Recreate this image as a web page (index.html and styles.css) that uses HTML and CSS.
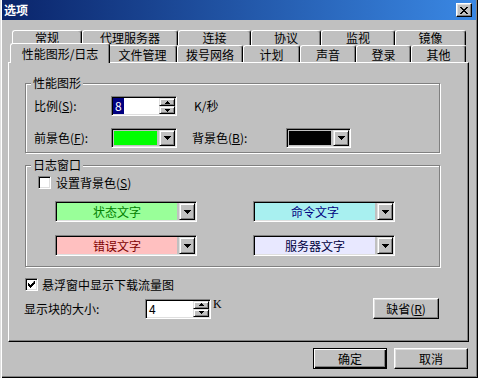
FILE: index.html
```html
<!DOCTYPE html>
<html lang="zh-CN">
<head>
  <meta charset="UTF-8" />
  <title>选项</title>
  <link rel="stylesheet" href="styles.css">
</head>
<body>
  <div class="window">
    <div class="titlebar">
      <span class="title">选项</span>
      <div class="close">
        <svg width="8" height="7" viewBox="0 0 8 7"><path d="M0 0h2v1h1v1h2v-1h1v-1h2v1h-1v1h-1v1h-1v1h1v1h1v1h1v1h-2v-1h-1v-1h-2v1h-1v1h-2v-1h1v-1h1v-1h1v-1h-1v-1h-1v-1h-1z"/></svg>
      </div>
    </div>

    <div class="tabctl">
      <div class="tab-row back">
        <div class="tab">常规</div>
        <div class="tab">代理服务器</div>
        <div class="tab">连接</div>
        <div class="tab">协议</div>
        <div class="tab">监视</div>
        <div class="tab">镜像</div>
      </div>
      <div class="tab-row front">
        <div class="tab active">性能图形/日志</div>
        <div class="tab">文件管理</div>
        <div class="tab">拨号网络</div>
        <div class="tab">计划</div>
        <div class="tab">声音</div>
        <div class="tab">登录</div>
        <div class="tab">其他</div>
      </div>

      <div class="panel">
        <div class="group perf">
          <span class="group-title">性能图形</span>
          <div class="row">
            <span class="lbl lbl-short">比例(<u>S</u>):</span>
            <div class="spin">
              <div class="spin-value"><span class="sel">8</span></div>
              <div class="spin-btns">
                <span class="spin-btn"><svg width="5" height="3" viewBox="0 0 5 3"><path d="M2 0h1v1h1v1h1v1h-5v-1h1v-1h1z"/></svg></span>
                <span class="spin-btn"><svg width="5" height="3" viewBox="0 0 5 3"><path d="M0 0h5v1h-1v1h-1v1h-1v-1h-1v-1h-1z"/></svg></span>
              </div>
            </div>
            <span class="unit">K/秒</span>
          </div>
          <div class="row gap-row">
            <span class="lbl lbl-short">前景色(<u>F</u>):</span>
            <div class="combo color-combo">
              <span class="combo-face fg-green"></span>
              <span class="drop"><svg width="7" height="4" viewBox="0 0 7 4"><path d="M0 0h7v1h-1v1h-1v1h-1v1h-1v-1h-1v-1h-1v-1h-1z"/></svg></span>
            </div>
            <span class="lbl lbl-bg">背景色(<u>B</u>):</span>
            <div class="combo color-combo narrow">
              <span class="combo-face bg-black"></span>
              <span class="drop"><svg width="7" height="4" viewBox="0 0 7 4"><path d="M0 0h7v1h-1v1h-1v1h-1v1h-1v-1h-1v-1h-1v-1h-1z"/></svg></span>
            </div>
          </div>
        </div>

        <div class="group log">
          <span class="group-title">日志窗口</span>
          <label class="check-row indent">
            <span class="check"></span>
            <span>设置背景色(<u>S</u>)</span>
          </label>
          <div class="combo-grid">
            <div class="combo text-combo">
              <span class="combo-face state">状态文字</span>
              <span class="drop"><svg width="7" height="4" viewBox="0 0 7 4"><path d="M0 0h7v1h-1v1h-1v1h-1v1h-1v-1h-1v-1h-1v-1h-1z"/></svg></span>
            </div>
            <div class="combo text-combo">
              <span class="combo-face command">命令文字</span>
              <span class="drop"><svg width="7" height="4" viewBox="0 0 7 4"><path d="M0 0h7v1h-1v1h-1v1h-1v1h-1v-1h-1v-1h-1v-1h-1z"/></svg></span>
            </div>
            <div class="combo text-combo">
              <span class="combo-face error">错误文字</span>
              <span class="drop"><svg width="7" height="4" viewBox="0 0 7 4"><path d="M0 0h7v1h-1v1h-1v1h-1v1h-1v-1h-1v-1h-1v-1h-1z"/></svg></span>
            </div>
            <div class="combo text-combo">
              <span class="combo-face server">服务器文字</span>
              <span class="drop"><svg width="7" height="4" viewBox="0 0 7 4"><path d="M0 0h7v1h-1v1h-1v1h-1v1h-1v-1h-1v-1h-1v-1h-1z"/></svg></span>
            </div>
          </div>
        </div>

        <label class="check-row float-opt">
          <span class="check checked">
            <svg width="7" height="7" viewBox="0 0 7 7"><path d="M6 0h1v3h-1v1h-1v1h-1v1h-1v1h-1v-1h-1v-1h-1v-3h1v1h1v1h1v-1h1v-1h1z"/></svg>
          </span>
          <span>悬浮窗中显示下载流量图</span>
        </label>

        <div class="size-row">
          <span class="lbl lbl-size">显示块的大小:</span>
          <div class="spin">
            <div class="spin-value plain">4</div>
            <div class="spin-btns">
              <span class="spin-btn"><svg width="5" height="3" viewBox="0 0 5 3"><path d="M2 0h1v1h1v1h1v1h-5v-1h1v-1h1z"/></svg></span>
              <span class="spin-btn"><svg width="5" height="3" viewBox="0 0 5 3"><path d="M0 0h5v1h-1v1h-1v1h-1v-1h-1v-1h-1z"/></svg></span>
            </div>
          </div>
          <span class="unit-k">K</span>
          <div class="btn reset">缺省(<u>R</u>)</div>
        </div>
      </div>
    </div>

    <div class="footer">
      <div class="btn default">确定</div>
      <div class="btn">取消</div>
    </div>
  </div>
</body>
</html>
```

FILE: styles.css
```css
body {
  margin: 0;
  background: #c0c0c0;
  font-family: "Noto Sans CJK SC", "Noto Sans CJK JP", sans-serif;
  font-size: 12px;
  line-height: 14px;
  color: #000;
}
u {
  text-decoration: underline;
}
.window {
  width: 478px;
  height: 378px;
  box-sizing: border-box;
  padding: 0 2px;
  background: #c0c0c0;
  box-shadow: inset 1px 0 #dfdfdf, inset 2px 0 #fff, inset -1px -1px #000, inset -2px -2px #808080;
}
.titlebar {
  height: 20px;
  display: flex;
  align-items: center;
  justify-content: space-between;
  padding: 0 4px 0 2px;
  background: linear-gradient(to right, #0a246a, #3a88e4);
  color: #fff;
  font-weight: bold;
}
.close {
  width: 16px;
  height: 14px;
  box-sizing: border-box;
  display: flex;
  align-items: center;
  justify-content: center;
  background: #c0c0c0;
  border: 1px solid;
  border-color: #fff #000 #000 #fff;
  box-shadow: inset -1px -1px #808080, inset 1px 1px #dfdfdf;
}

/* tabs */
.tabctl {
  margin: 10px 7px 0 6px;
}
.tab-row {
  display: flex;
  align-items: flex-start;
  padding-left: 4px;
}
.tab-row.back {
  height: 15px;
}
.tab-row.front {
  height: 17px;
}
.tab {
  box-sizing: border-box;
  height: 100%;
  text-align: center;
  border-top: 1px solid #fff;
  border-left: 1px solid #fff;
  border-right: 1px solid #000;
  border-radius: 3px 3px 0 0;
  box-shadow: inset -1px 0 #808080;
  background: #c0c0c0;
}
.back .tab {
  line-height: 14px;
}
.front .tab {
  line-height: 17px;
}
.back .tab:nth-child(1) { width: 70px; }
.back .tab:nth-child(2) { width: 96px; }
.back .tab:nth-child(3) { width: 73px; }
.back .tab:nth-child(4) { width: 70px; }
.back .tab:nth-child(5) { width: 74px; }
.back .tab:nth-child(6) { width: 71px; }
.front .tab:nth-child(2) { width: 69px; }
.front .tab:nth-child(3) { width: 66px; }
.front .tab:nth-child(4) { width: 57px; }
.front .tab:nth-child(5) { width: 56px; }
.front .tab:nth-child(6) { width: 55px; }
.front .tab:nth-child(7) { width: 55px; }
.tab.active {
  position: relative;
  z-index: 1;
  width: 100px;
  height: 20px;
  margin: -2px -2px 0 -2px;
  line-height: 19px;
}

.panel {
  height: 280px;
  box-sizing: border-box;
  border: 1px solid;
  border-color: #fff #000 #000 #fff;
  box-shadow: inset -1px -1px #808080;
  padding-top: 20px;
}

/* group boxes */
.group {
  position: relative;
  margin: 0 28px 0 16px;
  border: 1px solid #808080;
  box-shadow: inset 1px 1px #fff, 1px 1px #fff;
}
.group-title {
  position: absolute;
  top: -7px;
  left: 5px;
  padding: 0 2px;
  line-height: 12px;
  background: #c0c0c0;
}
.perf {
  padding: 12px 0 4px 8px;
}
.log {
  margin-top: 12px;
  padding: 10px 0 10px 0;
}
.row {
  display: flex;
  align-items: center;
  height: 20px;
}
.gap-row {
  margin-top: 12px;
}
.lbl-short {
  width: 77px;
}
.lbl-bg {
  width: 94px;
  margin-left: 15px;
}
.unit {
  margin-left: 17px;
}

/* spin boxes */
.spin {
  display: flex;
  box-sizing: border-box;
  width: 66px;
  height: 20px;
  padding: 1px;
  background: #fff;
  border: 1px solid;
  border-color: #808080 #fff #fff #808080;
  box-shadow: inset 1px 1px #000, inset -1px -1px #dfdfdf;
}
.spin-value {
  flex: 1;
  display: flex;
  align-items: center;
  line-height: 16px;
}
.spin-value.plain {
  padding-left: 2px;
}
.sel {
  background: #000080;
  color: #fff;
  padding: 0 2px;
}
.spin-btns {
  display: flex;
  flex-direction: column;
  width: 16px;
}
.spin-btn {
  flex: 1;
  display: flex;
  align-items: center;
  justify-content: center;
  box-sizing: border-box;
  background: #c0c0c0;
  border: 1px solid;
  border-color: #dfdfdf #000 #000 #dfdfdf;
  box-shadow: inset 1px 1px #fff, inset -1px -1px #808080;
}

/* combo boxes */
.combo {
  display: flex;
  box-sizing: border-box;
  padding: 1px;
  border: 1px solid;
  border-color: #808080 #fff #fff #808080;
  box-shadow: inset 1px 1px #000, inset -1px -1px #dfdfdf;
  background: #c0c0c0;
}
.color-combo {
  width: 66px;
  height: 20px;
}
.color-combo.narrow {
  width: 65px;
}
.combo-face {
  flex: 1;
  text-align: center;
  line-height: 16px;
}
.fg-green { background: #00ff00; margin: 1px 2px 1px 1px; }
.bg-black { background: #000; margin: 1px 2px 1px 1px; }
.drop {
  width: 16px;
  display: flex;
  align-items: center;
  justify-content: center;
  box-sizing: border-box;
  background: #c0c0c0;
  border: 1px solid;
  border-color: #dfdfdf #000 #000 #dfdfdf;
  box-shadow: inset 1px 1px #fff, inset -1px -1px #808080;
}
.combo-grid {
  display: grid;
  grid-template-columns: 142px 142px;
  column-gap: 56px;
  row-gap: 13px;
  margin: 12px 0 0 29px;
}
.text-combo {
  height: 21px;
}
.text-combo .combo-face {
  line-height: 17px;
  margin-right: 2px;
}
.state { background: #99ff99; color: #008000; }
.command { background: #a8f0f0; color: #000080; }
.error { background: #ffc0c0; color: #800000; }
.server { background: #e8e8ff; color: #000040; }

/* check boxes */
.check-row {
  display: flex;
  align-items: center;
  height: 13px;
}
.check-row .check {
  margin-right: 5px;
}
.indent {
  padding-left: 12px;
}
.check {
  width: 13px;
  height: 13px;
  box-sizing: border-box;
  display: flex;
  align-items: center;
  justify-content: center;
  background: #fff;
  border: 1px solid;
  border-color: #808080 #fff #fff #808080;
  box-shadow: inset 1px 1px #000, inset -1px -1px #dfdfdf;
}
.float-opt {
  margin: 11px 0 0 16px;
}
.float-opt .check {
  margin-right: 4px;
}

.size-row {
  display: flex;
  align-items: center;
  height: 21px;
  margin: 7px 29px 0 15px;
}
.lbl-size {
  width: 121px;
}
.unit-k {
  align-self: flex-start;
  margin-left: 2px;
  line-height: 12px;
  font-family: "Liberation Serif", serif;
}

/* buttons */
.btn {
  box-sizing: border-box;
  width: 74px;
  height: 21px;
  line-height: 19px;
  text-align: center;
  background: #c0c0c0;
  border: 1px solid;
  border-color: #fff #000 #000 #fff;
  box-shadow: inset -1px -1px #808080, inset 1px 1px #dfdfdf;
}
.btn.reset {
  width: 66px;
  margin-left: auto;
}
.btn.default {
  border-color: #000;
  box-shadow: inset 1px 1px #fff, inset -1px -1px #000, inset -2px -2px #808080;
}
.footer {
  display: flex;
  justify-content: flex-end;
  gap: 7px;
  margin: 6px 8px 0 0;
}
```
